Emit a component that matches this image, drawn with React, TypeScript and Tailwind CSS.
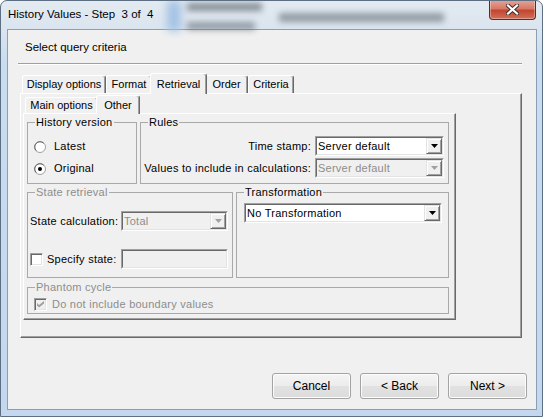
import type { ReactNode } from "react";

const sans = "font-['Liberation_Sans',Arial,sans-serif]";

function Tab({ label, className, selected = false }: { label: string; className: string; selected?: boolean }) {
  return (
    <div
      className={`flex items-center justify-center rounded-t-[3px] border-t border-l border-r border-t-white border-l-white border-r-[#696969] bg-[#f0f0f0] tracking-normal shadow-[inset_-1px_0_0_#a0a0a0] ${
        selected ? "relative z-10 -mx-[2px] -mb-px" : ""
      } ${className}`}
    >
      {label}
    </div>
  );
}

function Group({
  label,
  className,
  disabled = false,
  children,
}: {
  label: string;
  className: string;
  disabled?: boolean;
  children?: ReactNode;
}) {
  return (
    <fieldset className={`border border-[#a9a9a9] ${className}`}>
      <legend className={`ml-[7px] px-[1px] leading-[13px] ${disabled ? "text-[#8d8d8d]" : "text-black"}`}>
        {label}
      </legend>
      {children}
    </fieldset>
  );
}

function Combo({ value, className, disabled = false }: { value: string; className: string; disabled?: boolean }) {
  return (
    <div className={`flex h-[20px] border border-t-[#a0a0a0] border-l-[#a0a0a0] border-r-white border-b-white ${className}`}>
      <div
        className={`flex flex-1 items-center border border-t-[#696969] border-l-[#696969] border-r-[#e3e3e3] border-b-[#e3e3e3] ${
          disabled ? "bg-[#f0f0f0] text-[#8d8d8d]" : "bg-white text-black"
        }`}
      >
        <span className="flex-1 pl-[1px] leading-[13px]">{value}</span>
        <span className="flex h-full w-[16px] items-center justify-center border border-t-[#e3e3e3] border-l-[#e3e3e3] border-r-[#696969] border-b-[#696969] bg-[#f0f0f0] shadow-[inset_1px_1px_0_#fff,inset_-1px_-1px_0_#a0a0a0]">
          <svg width="7" height="4" viewBox="0 0 7 4">
            <path d="M0 0h7L3.5 4z" fill={disabled ? "#a0a0a0" : "#000"} />
          </svg>
        </span>
      </div>
    </div>
  );
}

function Radio({ label, checked = false }: { label: string; checked?: boolean }) {
  return (
    <div className="flex h-[13px] items-center gap-[8px]">
      <svg width="12" height="12" viewBox="0 0 12 12">
        <circle cx="6" cy="6" r="5.5" fill="#fff" stroke="#a0a0a0" />
        <path d="M2.3 9.7A5 5 0 0 1 9.7 2.3" fill="none" stroke="#696969" />
        {checked && <circle cx="6" cy="6" r="2" fill="#000" />}
      </svg>
      <span className="leading-[13px]">{label}</span>
    </div>
  );
}

function Check({ checked = false, disabled = false }: { checked?: boolean; disabled?: boolean }) {
  return (
    <span
      className={`flex h-[13px] w-[13px] items-center justify-center border border-t-[#a0a0a0] border-l-[#a0a0a0] border-r-white border-b-white shadow-[inset_1px_1px_0_#696969,inset_-1px_-1px_0_#e3e3e3] ${
        disabled ? "bg-[#f0f0f0]" : "bg-white"
      }`}
    >
      {checked && (
        <svg width="7" height="7" viewBox="0 0 7 7">
          <path d="M0 2l2 2 5-4v2.5l-5 4-2-2z" fill="#a0a0a0" />
        </svg>
      )}
    </span>
  );
}

function Button({ label }: { label: string }) {
  return (
    <button className="h-[26px] w-[79px] rounded-[3px] border border-[#a3a3a3] bg-[linear-gradient(#f4f4f4,#ececec_50%,#e2e2e2_50%,#dcdcdc)] text-[12px] tracking-normal text-black shadow-[inset_0_0_0_1px_#fcfcfc]">
      {label}
    </button>
  );
}

export default function App() {
  return (
    <div
      className={`${sans} relative flex h-[417px] w-[543px] flex-col overflow-hidden rounded-t-[7px] border border-[#5d6f83] bg-[linear-gradient(180deg,#e3eaf1_0px,#dbe5ef_28px,#c9dcf0_60px,#c3d8ee_100%)] text-[11px] tracking-[0.25px] text-black`}
    >
      {/* blurred desktop behind the glass */}
      <div className="pointer-events-none absolute left-[166px] top-0 h-[30px] w-[14px] bg-[#a3c2e4] blur-[4px]" />
      <div className="pointer-events-none absolute left-[186px] top-[2px] h-[8px] w-[75px] bg-[#5f6972] opacity-70 blur-[3px]" />
      <div className="pointer-events-none absolute left-[186px] top-[21px] h-[8px] w-[68px] bg-[#5f6972] opacity-60 blur-[3px]" />
      <div className="pointer-events-none absolute left-[278px] top-[12px] h-[9px] w-[165px] bg-[#5f6972] opacity-60 blur-[3px]" />

      {/* title bar */}
      <div className="relative flex h-[28px] shrink-0 items-start pl-[7px] pt-[5px]">
        <span className="whitespace-pre text-[11.5px] leading-[16px] tracking-normal text-black">History Values - Step  3 of  4</span>
        <div className="absolute right-[6px] top-[-1px] flex h-[20px] w-[47px] items-center justify-center rounded-b-[4px] border border-t-0 border-[#5b2c26] bg-[linear-gradient(#e6a598,#d57a68_45%,#c4452f_55%,#d0705a)] shadow-[inset_0_0_0_1px_rgba(255,255,255,0.35)]">
          <svg width="13" height="11" viewBox="0 0 13 11">
            <path d="M2 1.5l9 8M11 1.5l-9 8" stroke="#3b2a28" strokeWidth="4" strokeLinecap="square" />
            <path d="M2 1.5l9 8M11 1.5l-9 8" stroke="#fff" strokeWidth="2.2" strokeLinecap="square" />
          </svg>
        </div>
      </div>

      {/* client area */}
      <div className="mb-[6px] ml-[6px] mr-[5px] flex flex-1 flex-col border border-[#8a9fb5] bg-[#f0f0f0]">
        <div className="h-[33px] shrink-0 pl-[17px] pt-[9px] text-[11.5px] leading-[16px] tracking-normal">Select query criteria</div>
        <div className="ml-[10px] h-[2px] w-[504px] border-t border-b border-t-[#a0a0a0] border-b-white" />

        {/* outer tabs */}
        <div className="ml-[12px] mt-[8px] flex h-[20px] items-end pl-[2px]">
          <Tab label="Display options" className="h-[18px] w-[84px]" />
          <Tab label="Format" className="h-[18px] w-[46px]" />
          <Tab label="Retrieval" className="h-[21px] w-[57px]" selected />
          <Tab label="Order" className="h-[18px] w-[43px]" />
          <Tab label="Criteria" className="h-[18px] w-[46px]" />
        </div>
        <div className="ml-[12px] h-[245px] w-[502px] border border-t-white border-l-white border-r-[#696969] border-b-[#696969] pl-[2px] pt-[1px] shadow-[inset_-1px_-1px_0_#a0a0a0]">
          {/* inner tabs */}
          <div className="ml-[2px] flex h-[18px] items-end">
            <Tab label="Main options" className="h-[16px] w-[73px]" />
            <Tab label="Other" className="h-[19px] w-[44px]" selected />
          </div>
          <div className="flex h-[207px] w-[433px] flex-col border border-t-white border-l-white border-r-[#696969] border-b-[#696969] pl-[3px] pt-[2px] shadow-[inset_-1px_-1px_0_#a0a0a0]">
            <div className="flex gap-[3px]">
              <Group label="History version" className="h-[68px] w-[110px]">
                <div className="mt-[11px] flex flex-col gap-[9px] pl-[6px]">
                  <Radio label="Latest" />
                  <Radio label="Original" checked />
                </div>
              </Group>
              <Group label="Rules" className="h-[68px] w-[309px]">
                <div className="mr-[4px] mt-[7px] flex flex-col items-end gap-[2px]">
                  <div className="flex items-center gap-[4px]">
                    <span>Time stamp:</span>
                    <Combo value="Server default" className="w-[129px]" />
                  </div>
                  <div className="flex items-center gap-[4px]">
                    <span>Values to include in calculations:</span>
                    <Combo value="Server default" className="w-[129px]" disabled />
                  </div>
                </div>
              </Group>
            </div>

            <div className="mt-[2px] flex gap-[3px]">
              <Group label="State retrieval" className="h-[92px] w-[206px]" disabled>
                <div className="mt-[12px] flex flex-col gap-[18px] pl-[2px]">
                  <div className="flex items-center">
                    <span className="w-[91px]">State calculation:</span>
                    <Combo value="Total" className="w-[107px]" disabled />
                  </div>
                  <div className="flex items-center">
                    <Check />
                    <span className="ml-[4px] w-[74px]">Specify state:</span>
                    <div className="h-[20px] w-[107px] border border-t-[#a0a0a0] border-l-[#a0a0a0] border-r-white border-b-white">
                      <div className="h-full border border-t-[#696969] border-l-[#696969] border-r-[#e3e3e3] border-b-[#e3e3e3] bg-[#f0f0f0]" />
                    </div>
                  </div>
                </div>
              </Group>
              <Group label="Transformation" className="h-[92px] w-[213px]">
                <div className="mt-[4px] pl-[7px]">
                  <Combo value="No Transformation" className="w-[198px]" />
                </div>
              </Group>
            </div>

            <Group label="Phantom cycle" className="mt-[3px] h-[33px] w-[422px]" disabled>
              <div className="mt-[2px] flex items-center gap-[5px] pl-[6px]">
                <Check checked disabled />
                <span className="text-[#8d8d8d]">Do not include boundary values</span>
              </div>
            </Group>
          </div>
        </div>

        {/* wizard buttons */}
        <div className="mt-auto flex justify-end gap-[9px] pb-[10px] pr-[9px]">
          <Button label="Cancel" />
          <Button label="< Back" />
          <Button label="Next >" />
        </div>
      </div>
    </div>
  );
}
